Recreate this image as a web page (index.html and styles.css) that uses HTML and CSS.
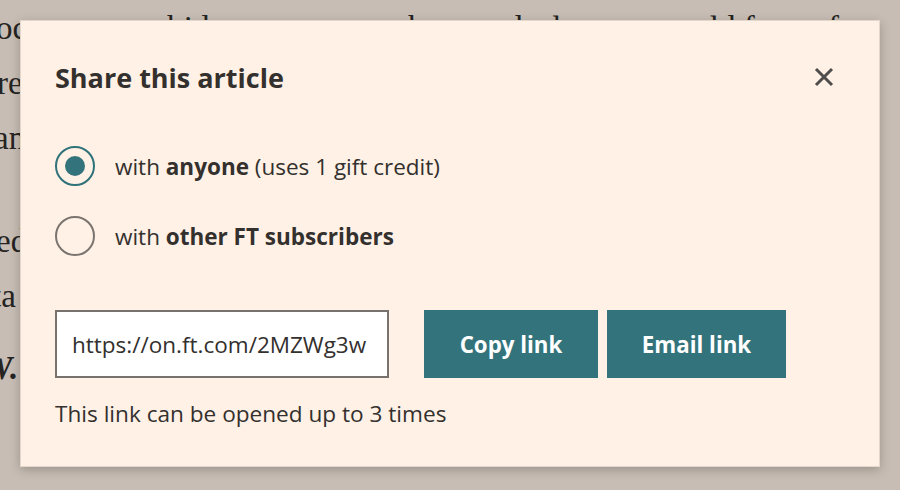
FILE: index.html
```
<html>
<head>
    <link rel="stylesheet" href="styles.css">
</head>
<body>
    <div class="article">
        <p class="l1">occur over a bid on a sure new base, a deal on a rare old fee as far</p>
        <p class="l2">re</p>
        <p class="l3">an</p>
        <p class="l4">ed</p>
        <p class="l5">ta</p>
        <p class="l6">W.</p>
    </div>
    <div class="overlay"></div>

    <div class="modal">
        <div class="modal-head">
            <h2>Share this article</h2>
            <button class="close" aria-label="Close">
                <svg width="20" height="20" viewBox="0 0 20 20">
                    <path d="M2 2 L18 18 M18 2 L2 18" stroke="#4f4d4b" stroke-width="3" fill="none"/>
                </svg>
            </button>
        </div>

        <div class="options">
            <label class="option">
                <input type="radio" name="share" value="anyone" checked>
                <span class="dot"></span>
                <span>with <b>anyone</b> (uses 1 gift credit)</span>
            </label>
            <label class="option">
                <input type="radio" name="share" value="subscribers">
                <span class="dot"></span>
                <span>with <b>other FT subscribers</b></span>
            </label>
        </div>

        <div class="link-row">
            <input class="url" type="text" value="https://on.ft.com/2MZWg3w" readonly>
            <button class="btn btn-copy">Copy link</button>
            <button class="btn btn-email">Email link</button>
        </div>
        <p class="note">This link can be opened up to 3 times</p>
    </div>
</body>
</html>
```

FILE: styles.css
```
body { margin: 0; background: #fff1e5; overflow: hidden; width: 900px; height: 490px; }

.article { font-family: "Liberation Serif", serif; font-size: 33px; color: #2b2826; }
.article p { margin: 0; line-height: 55px; white-space: pre; }
.article .l1 { margin-top: 1px; margin-left: -4px; }
.article .l2 { margin-left: -3px; }
.article .l3 { margin-left: -6px; }
.article .l4 { margin-top: 48px; margin-left: -4px; }
.article .l5 { margin-left: -8px; }
.article .l6 { margin-top: 17px; margin-left: -17px; font-weight: bold; font-style: italic; }

.overlay { position: absolute; top: 0; left: 0; right: 0; bottom: 0; background: rgba(20, 25, 25, 0.24); }

.modal {
    position: absolute; left: 20px; top: 20px; width: 860px; height: 447px;
    box-sizing: border-box; padding: 39px 34px 0 34px;
    background: #fff1e5; border: 1px solid #e3d6ca;
    box-shadow: 0 3px 10px rgba(0, 0, 0, 0.22);
    font-family: "Open Sans", sans-serif; color: #33302e;
}

.modal-head { display: flex; justify-content: space-between; align-items: center; height: 34px; }
.modal-head h2 { margin: 0; font-size: 27px; font-weight: 700; }
.close { border: 0; background: none; padding: 0; margin-right: 11px; width: 20px; height: 20px; display: flex; }

.options { margin-top: 52px; display: flex; flex-direction: column; gap: 30px; }
.option { display: flex; align-items: center; gap: 20px; font-size: 22.5px; height: 40px; }
.option input { display: none; }
.dot { width: 40px; height: 40px; box-sizing: border-box; border: 2px solid #7a7470; border-radius: 50%; position: relative; flex: none; }
.option input:checked + .dot { border-color: #2f7279; }
.option input:checked + .dot::after {
    content: ""; position: absolute; left: 8px; top: 8px; width: 20px; height: 20px;
    border-radius: 50%; background: #33737b;
}

.link-row { margin-top: 54px; display: flex; height: 68px; }
.url {
    width: 334px; height: 68px; box-sizing: border-box; margin-right: 35px;
    border: 2px solid #77726e; background: #fff; padding: 0 15px;
    font-family: "Open Sans", sans-serif; font-size: 22.5px; color: #33302e;
}
.btn {
    height: 68px; border: 0; background: #33737b; color: #fff;
    font-family: "Open Sans", sans-serif; font-size: 22.3px; font-weight: 700;
}
.btn-copy { width: 174px; margin-right: 9px; }
.btn-email { width: 179px; }

.note { margin: 22px 0 0 0; font-size: 22.6px; line-height: 28px; }
```
